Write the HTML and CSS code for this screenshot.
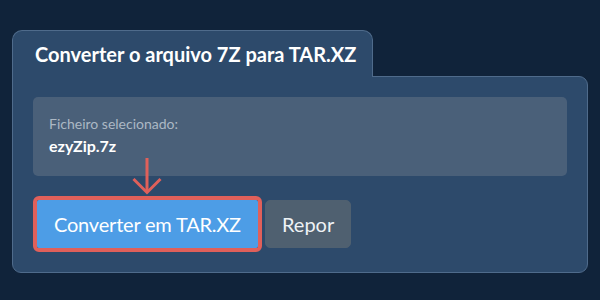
FILE: index.html
```html
<!DOCTYPE html>
<html lang="pt">
<head>
<meta charset="utf-8">
<title>Converter o arquivo 7Z para TAR.XZ</title>
<link rel="stylesheet" href="styles.css">
</head>
<body>
  <div class="card">
    <div class="tab"><h1 class="title">Converter o arquivo 7Z para TAR.XZ</h1></div>
    <div class="body">
      <div class="file-panel">
        <div class="file-label">Ficheiro selecionado:</div>
        <div class="file-name">ezyZip.7z</div>
      </div>
      <div class="actions">
        <div class="highlight">
          <svg class="arrow" width="30" height="37" viewBox="0 0 30 37" aria-hidden="true">
            <line x1="15" y1="0" x2="15" y2="34" stroke="#e0605a" stroke-width="3"/>
            <polyline points="1.5,21 15,34.5 28.5,21" fill="none" stroke="#e0605a" stroke-width="3"/>
          </svg>
          <button class="btn btn-primary">Converter em TAR.XZ</button>
        </div>
        <button class="btn btn-secondary">Repor</button>
      </div>
    </div>
  </div>
</body>
</html>
```

FILE: styles.css
```css
* { box-sizing: border-box; }

html, body {
  margin: 0;
  height: 100%;
}

body {
  background: #10233a;
  font-family: Lato, "Open Sans", sans-serif;
  padding: 30px 12px 0 12px;
}

.card {
  width: 576px;
}

.tab {
  display: block;
  width: 361px;
  background: #2d4a6b;
  border: 1px solid #4f6b8b;
  border-bottom: none;
  border-radius: 10px 10px 0 0;
  padding: 11px 10px 11px 22px;
  margin-bottom: -1px;
  position: relative;
  z-index: 1;
}

.title {
  margin: 0;
  font-size: 20px;
  line-height: 24px;
  font-weight: 700;
  color: #ffffff;
  white-space: nowrap;
}

.body {
  background: #2d4a6b;
  border: 1px solid #4f6b8b;
  border-radius: 0 9px 9px 9px;
  padding: 20px 20px 20px 20px;
}

.file-panel {
  background: #4a6079;
  border-radius: 5px;
  padding: 16px 16px 18px 16px;
}

.file-label {
  font-size: 14px;
  line-height: 21px;
  color: #acb8c4;
}

.file-name {
  font-size: 16px;
  line-height: 24px;
  font-weight: 700;
  color: #ffffff;
}

.actions {
  margin-top: 20px;
  display: flex;
  align-items: center;
  gap: 3px;
}

.highlight {
  position: relative;
  border: 4px solid #e0605a;
  border-radius: 6px;
  display: flex;
}

.arrow {
  position: absolute;
  left: 95px;
  top: -42px;
}

.btn {
  font-family: Lato, "Open Sans", sans-serif;
  font-size: 20px;
  line-height: 30px;
  padding: 8px 16px;
  border-radius: 5px;
  color: #ffffff;
  cursor: pointer;
  margin: 0;
}

.btn-primary {
  background: #4d9de6;
  border: 1px solid #4d9de6;
  border-radius: 2px;
  letter-spacing: -0.2px;
}

.btn-secondary {
  background: #4f6070;
  border: 1px solid #4f6070;
  color: #eef2f5;
}
```
